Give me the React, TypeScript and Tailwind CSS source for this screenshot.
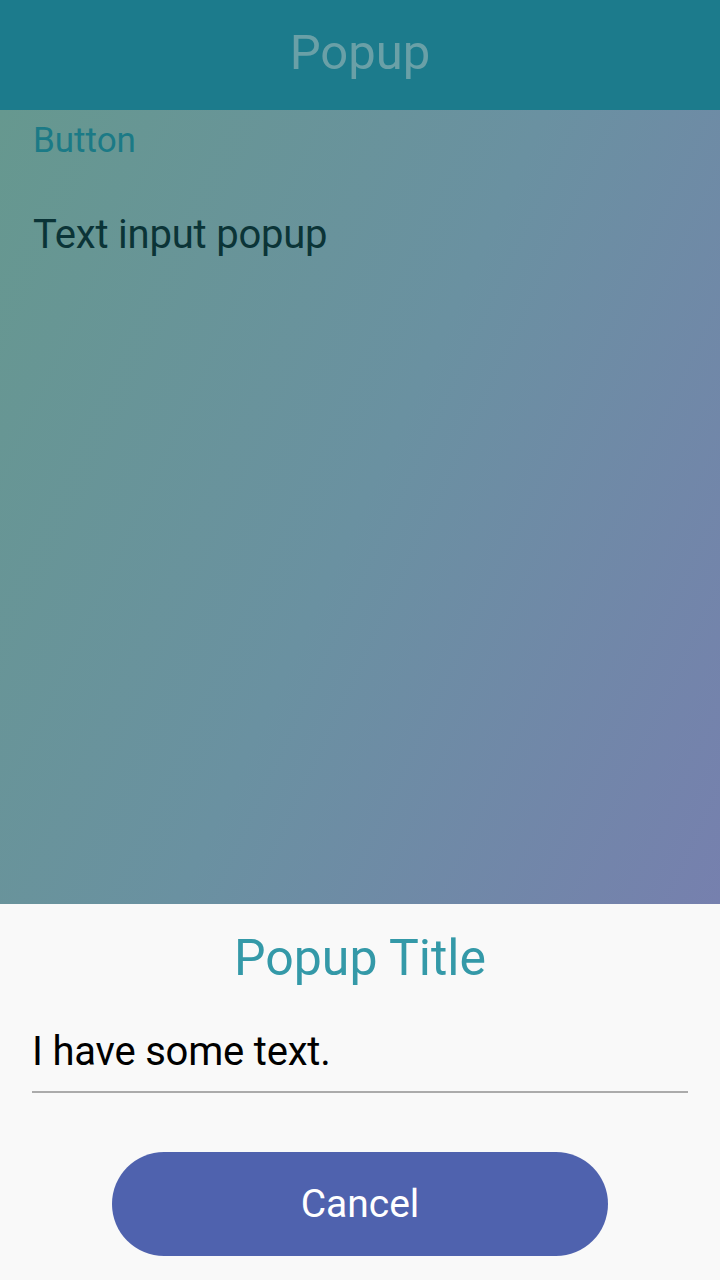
import React from "react";

export default function App() {
  const font = { fontFamily: "Roboto, 'Noto Sans', sans-serif" };
  return (
    <div className="w-[720px] h-[1280px] flex flex-col overflow-hidden" style={font}>
      <header className="h-[110px] shrink-0 bg-[#1c7b8c] flex justify-center pt-[28px]">
        <h1 className="text-[49px] font-normal text-[#6aa0a7] leading-none">Popup</h1>
      </header>
      <main className="flex-1 bg-[linear-gradient(115deg,#66988f_0%,#6a91a1_50%,#7680ae_100%)] px-[33px] pt-[13px]">
        <div className="text-[35px] leading-none text-[#1b7a86]">Button</div>
        <div className="mt-[57px] text-[40px] leading-none text-[#0b3437] tracking-[-0.2px]">Text input popup</div>
      </main>
      <section className="h-[376px] shrink-0 bg-[#f9f9f9] flex flex-col items-center">
        <div className="mt-[29px] text-[50px] leading-none text-[#3499a8]">Popup Title</div>
        <div className="mt-[49px] w-[656px] border-b-2 border-[#ababab] pb-[19px]">
          <div className="text-[40px] leading-none text-black tracking-[-0.2px]">I have some text.</div>
        </div>
        <button className="mt-[59px] w-[496px] h-[104px] rounded-full bg-[#4f62ae] text-white text-[39px] leading-none flex items-center justify-center">
          Cancel
        </button>
      </section>
    </div>
  );
}
